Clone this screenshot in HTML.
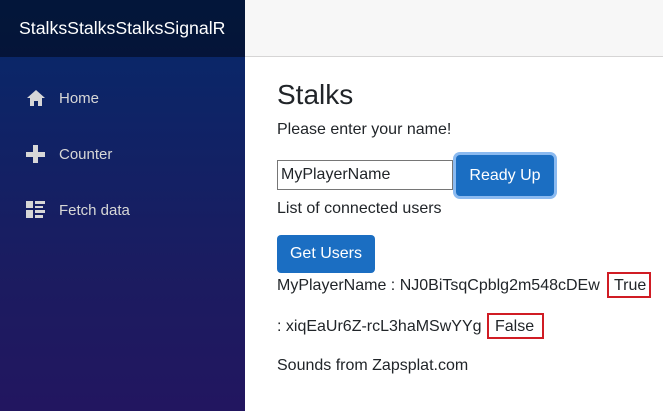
<!DOCTYPE html>
<html><head><style>
*{box-sizing:border-box;margin:0;padding:0}
body{width:663px;height:411px;overflow:hidden;font-family:"Liberation Sans",sans-serif;background:#fff;position:relative;color:#212529}
.side{position:absolute;left:0;top:0;width:245px;height:411px;background:linear-gradient(180deg,#06296a 0%,#1c1b60 70%,#221660 100%)}
.brand{height:57px;background:rgba(0,0,0,0.45);color:#fff;font-size:17.7px;padding-left:19px;line-height:57px}
.nav{position:absolute;left:26px;color:#d7d7d7;font-size:15px;display:flex;align-items:center}
.nav svg{margin-right:13px}
.top{position:absolute;left:245px;top:0;right:0;height:57px;background:#f7f7f7;border-bottom:1px solid #d6d5d5}
.a{position:absolute;font-size:16px;white-space:nowrap}
.btn{position:absolute;background:#1b6ec2;color:#fff;border-radius:4px;font-size:16px;text-align:center}
.box{position:absolute;border:2px solid #d01c24}
</style></head><body>
<div class="side">
<div class="brand">StalksStalksStalksSignalR</div>
<div class="nav" style="top:89px"><svg width="20" height="18" viewBox="0 0 20 18"><path d="M10 1L1 9h3v8h4v-5h4v5h4V9h3z" fill="#d7d7d7"/></svg>Home</div>
<div class="nav" style="top:145px"><svg width="20" height="18" viewBox="0 0 20 18"><path d="M7 0h5v7h7v5h-7v6H7v-6H0V7h7z" fill="#d7d7d7"/></svg>Counter</div>
<div class="nav" style="top:201px"><svg width="20" height="18" viewBox="0 0 20 18"><path d="M0 0h7v7H0zM0 9h7v8H0zM9 0h10v3H9zM9 5h8v2H9zM9 9h10v3H9zM9 14h8v3H9z" fill="#d7d7d7"/></svg>Fetch data</div>
</div>
<div class="top"></div>
<div class="a" style="left:277px;top:79px;font-size:28px">Stalks</div>
<div class="a" style="left:277px;top:121px">Please enter your name!</div>
<div style="position:absolute;left:277px;top:160px;width:176px;height:30px;border:1px solid #767676;padding-left:3px;font-size:16px;line-height:28px">MyPlayerName</div>
<div class="btn" style="left:456px;top:155px;width:98px;height:41px;line-height:41px;box-shadow:0 0 0 3px #8bbaf0">Ready Up</div>
<div class="a" style="left:277px;top:200px">List of connected users</div>
<div class="btn" style="left:277px;top:235px;width:98px;height:38px;line-height:38px">Get Users</div>
<div class="a" style="left:277px;top:277px">MyPlayerName : NJ0BiTsqCpblg2m548cDEw</div>
<div class="box" style="left:607px;top:272px;width:44px;height:26px"></div>
<div class="a" style="left:614px;top:277px">True</div>
<div class="a" style="left:277px;top:318px">: xiqEaUr6Z-rcL3haMSwYYg</div>
<div class="box" style="left:487px;top:313px;width:57px;height:26px"></div>
<div class="a" style="left:495px;top:318px">False</div>
<div class="a" style="left:277px;top:357px">Sounds from Zapsplat.com</div>
</body></html>
